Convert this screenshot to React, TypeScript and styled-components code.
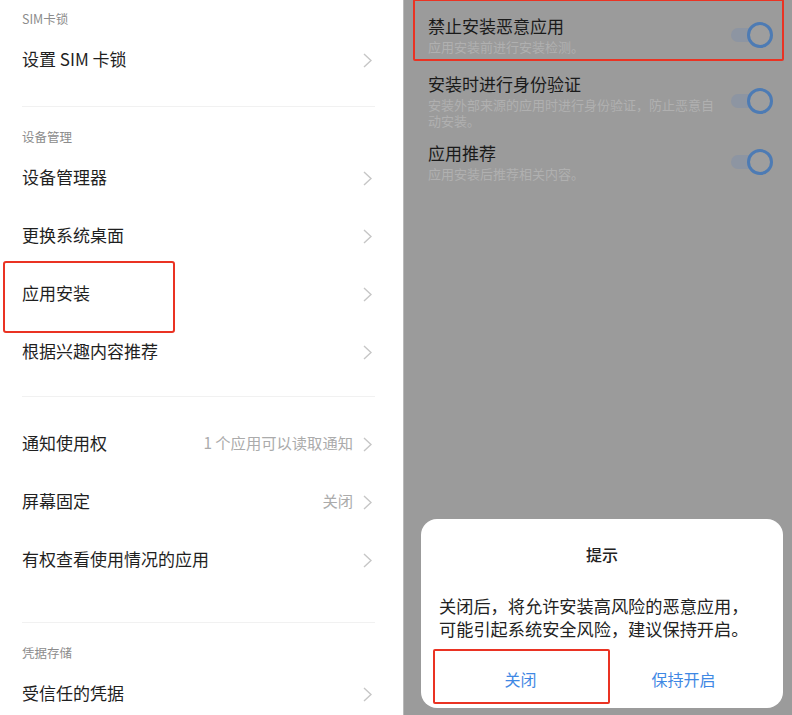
import { Fragment } from "react";
import styled, { createGlobalStyle } from "styled-components";

const GlobalStyle = createGlobalStyle`
  html, body {
    margin: 0;
    padding: 0;
    height: 715px;
    overflow: hidden;
    background: #ffffff;
  }
  body {
    font-family: "Noto Sans CJK SC", "Noto Sans", sans-serif;
  }
`;

type Row = { label: string; value?: string; marked?: boolean };

const deviceRows: Row[] = [
  { label: "设备管理器" },
  { label: "更换系统桌面" },
  { label: "应用安装", marked: true },
  { label: "根据兴趣内容推荐" },
];

const accessRows: Row[] = [
  { label: "通知使用权", value: "1 个应用可以读取通知" },
  { label: "屏幕固定", value: "关闭" },
  { label: "有权查看使用情况的应用" },
];

const switches = [
  { title: "禁止安装恶意应用", desc: "应用安装前进行安装检测。", space: 15, marked: true },
  { title: "安装时进行身份验证", desc: "安装外部来源的应用时进行身份验证，防止恶意自动安装。", space: 18 },
  { title: "应用推荐", desc: "应用安装后推荐相关内容。", space: 13 },
];

const Chevron = () => (
  <svg width="9" height="15" viewBox="0 0 9 15">
    <polyline points="1,1 8,7.5 1,14" fill="none" stroke="#c6c6c6" strokeWidth="1.4" />
  </svg>
);

const SettingRow = ({ label, value, marked }: Row) => (
  <RowItem>
    <RowLabel>{label}</RowLabel>
    {value && <RowValue>{value}</RowValue>}
    <Chevron />
    {marked && <LeftMark />}
  </RowItem>
);

const App = () => {
  return (
    <Screen>
      <GlobalStyle />
      <SettingsPanel>
        <SectionHeader $top={11}>SIM卡锁</SectionHeader>
        <SettingRow label="设置 SIM 卡锁" />
        <Divider $top={17} />
        <SectionHeader $top={22}>设备管理</SectionHeader>
        {deviceRows.map((r) => (
          <SettingRow key={r.label} {...r} />
        ))}
        <Divider $top={15} />
        <Group>
          {accessRows.map((r) => (
            <SettingRow key={r.label} {...r} />
          ))}
        </Group>
        <Divider $top={33} />
        <SectionHeader $top={22}>凭据存储</SectionHeader>
        <SettingRow label="受信任的凭据" />
      </SettingsPanel>

      <InstallPanel>
        <SwitchList>
          {switches.map((s) => (
            <SwitchItem key={s.title} $space={s.space}>
              <SwitchText>
                <SwitchTitle>{s.title}</SwitchTitle>
                <SwitchDesc>{s.desc}</SwitchDesc>
              </SwitchText>
              <Toggle>
                <Track />
                <Thumb />
              </Toggle>
              {s.marked && <TopMark />}
            </SwitchItem>
          ))}
        </SwitchList>

        <Dialog>
          <DialogTitle>提示</DialogTitle>
          <DialogBody>
            {["关闭后，将允许安装高风险的恶意应用，", "可能引起系统安全风险，建议保持开启。"].map((line) => (
              <Fragment key={line}>
                <BodyLine>{line}</BodyLine>
              </Fragment>
            ))}
          </DialogBody>
          <DialogActions>
            <ActionButton>
              关闭
              <ButtonMark />
            </ActionButton>
            <ActionButton>保持开启</ActionButton>
          </DialogActions>
        </Dialog>
      </InstallPanel>
    </Screen>
  );
};

export default App;

const Screen = styled.div`
  display: flex;
  width: 792px;
  height: 715px;
  overflow: hidden;
`;

const SettingsPanel = styled.div`
  width: 403px;
  flex-shrink: 0;
  background: #ffffff;
  display: flex;
  flex-direction: column;
`;

const SectionHeader = styled.div<{ $top: number }>`
  padding: ${(p) => p.$top}px 22px 4px;
  font-size: 12.5px;
  line-height: 16px;
  color: #8c8c8c;
`;

const RowItem = styled.div`
  position: relative;
  display: flex;
  align-items: center;
  box-sizing: border-box;
  height: 58px;
  flex-shrink: 0;
  padding: 0 31px 4px 22px;

  svg {
    margin-top: 4px;
  }
`;

const RowLabel = styled.div`
  flex: 1;
  font-size: 17px;
  color: #1f1f1f;
  white-space: nowrap;
`;

const RowValue = styled.div`
  margin-right: 10px;
  font-size: 15.3px;
  color: #ababab;
  white-space: nowrap;
`;

const Divider = styled.div<{ $top: number }>`
  margin: ${(p) => p.$top}px 28px 0 22px;
  height: 1px;
  flex-shrink: 0;
  background: #f1f1f1;
`;

const Group = styled.div`
  padding-top: 18px;
`;

const LeftMark = styled.div`
  position: absolute;
  left: 3px;
  top: -4px;
  width: 172px;
  height: 72px;
  box-sizing: border-box;
  border: 2px solid #ea3323;
  border-radius: 3px;
`;

const InstallPanel = styled.div`
  flex: 1;
  background: #9b9b9b;
  border-left: 1px solid #b9b9b9;
  display: flex;
  flex-direction: column;
  justify-content: space-between;
  padding-bottom: 7px;
`;

const SwitchList = styled.div`
  display: flex;
  flex-direction: column;
  padding: 0 19px 0 24px;
`;

const SwitchItem = styled.div<{ $space: number }>`
  position: relative;
  display: flex;
  align-items: center;
  gap: 12px;
  margin-top: ${(p) => p.$space}px;
`;

const SwitchText = styled.div`
  flex: 1;
  min-width: 0;
`;

const SwitchTitle = styled.div`
  font-size: 17px;
  line-height: 22px;
  margin-bottom: 2px;
  color: #1a1a1a;
`;

const SwitchDesc = styled.div`
  font-size: 13px;
  line-height: 16px;
  color: #b0b0b0;
`;

const Toggle = styled.div`
  position: relative;
  width: 42px;
  height: 26px;
  flex-shrink: 0;
`;

const Track = styled.div`
  position: absolute;
  left: 0;
  top: 6px;
  width: 36px;
  height: 14px;
  border-radius: 7px;
  background: #8d95a2;
`;

const Thumb = styled.div`
  position: absolute;
  right: 0;
  top: 0;
  width: 26px;
  height: 26px;
  box-sizing: border-box;
  border-radius: 50%;
  border: 3px solid #4d7bb4;
  background: #9e9e9e;
`;

const TopMark = styled.div`
  position: absolute;
  left: -15px;
  right: -11px;
  top: -16px;
  bottom: -6px;
  border: 2.5px solid #ea3323;
  border-radius: 2px;
`;

const Dialog = styled.div`
  margin: 0 9px 0 17px;
  height: 189px;
  box-sizing: border-box;
  padding: 25px 18px 0;
  background: #ffffff;
  border-radius: 16px;
  display: flex;
  flex-direction: column;
`;

const DialogTitle = styled.div`
  text-align: center;
  font-size: 16px;
  line-height: 20px;
  font-weight: 500;
  color: #222222;
`;

const DialogBody = styled.div`
  margin-top: 30px;
  font-size: 17.2px;
  line-height: 23px;
  color: #222222;
`;

const BodyLine = styled.div`
  white-space: nowrap;
`;

const DialogActions = styled.div`
  margin-top: 17px;
  display: grid;
  grid-template-columns: 1fr 1fr;
  height: 46px;
`;

const ActionButton = styled.div`
  position: relative;
  display: flex;
  align-items: center;
  justify-content: center;
  padding-bottom: 2px;
  font-size: 16px;
  color: #3f88e4;
`;

const ButtonMark = styled.div`
  position: absolute;
  left: -6px;
  right: -8px;
  top: -8px;
  bottom: -1px;
  border: 2.5px solid #ea3323;
  border-radius: 2px;
`;
